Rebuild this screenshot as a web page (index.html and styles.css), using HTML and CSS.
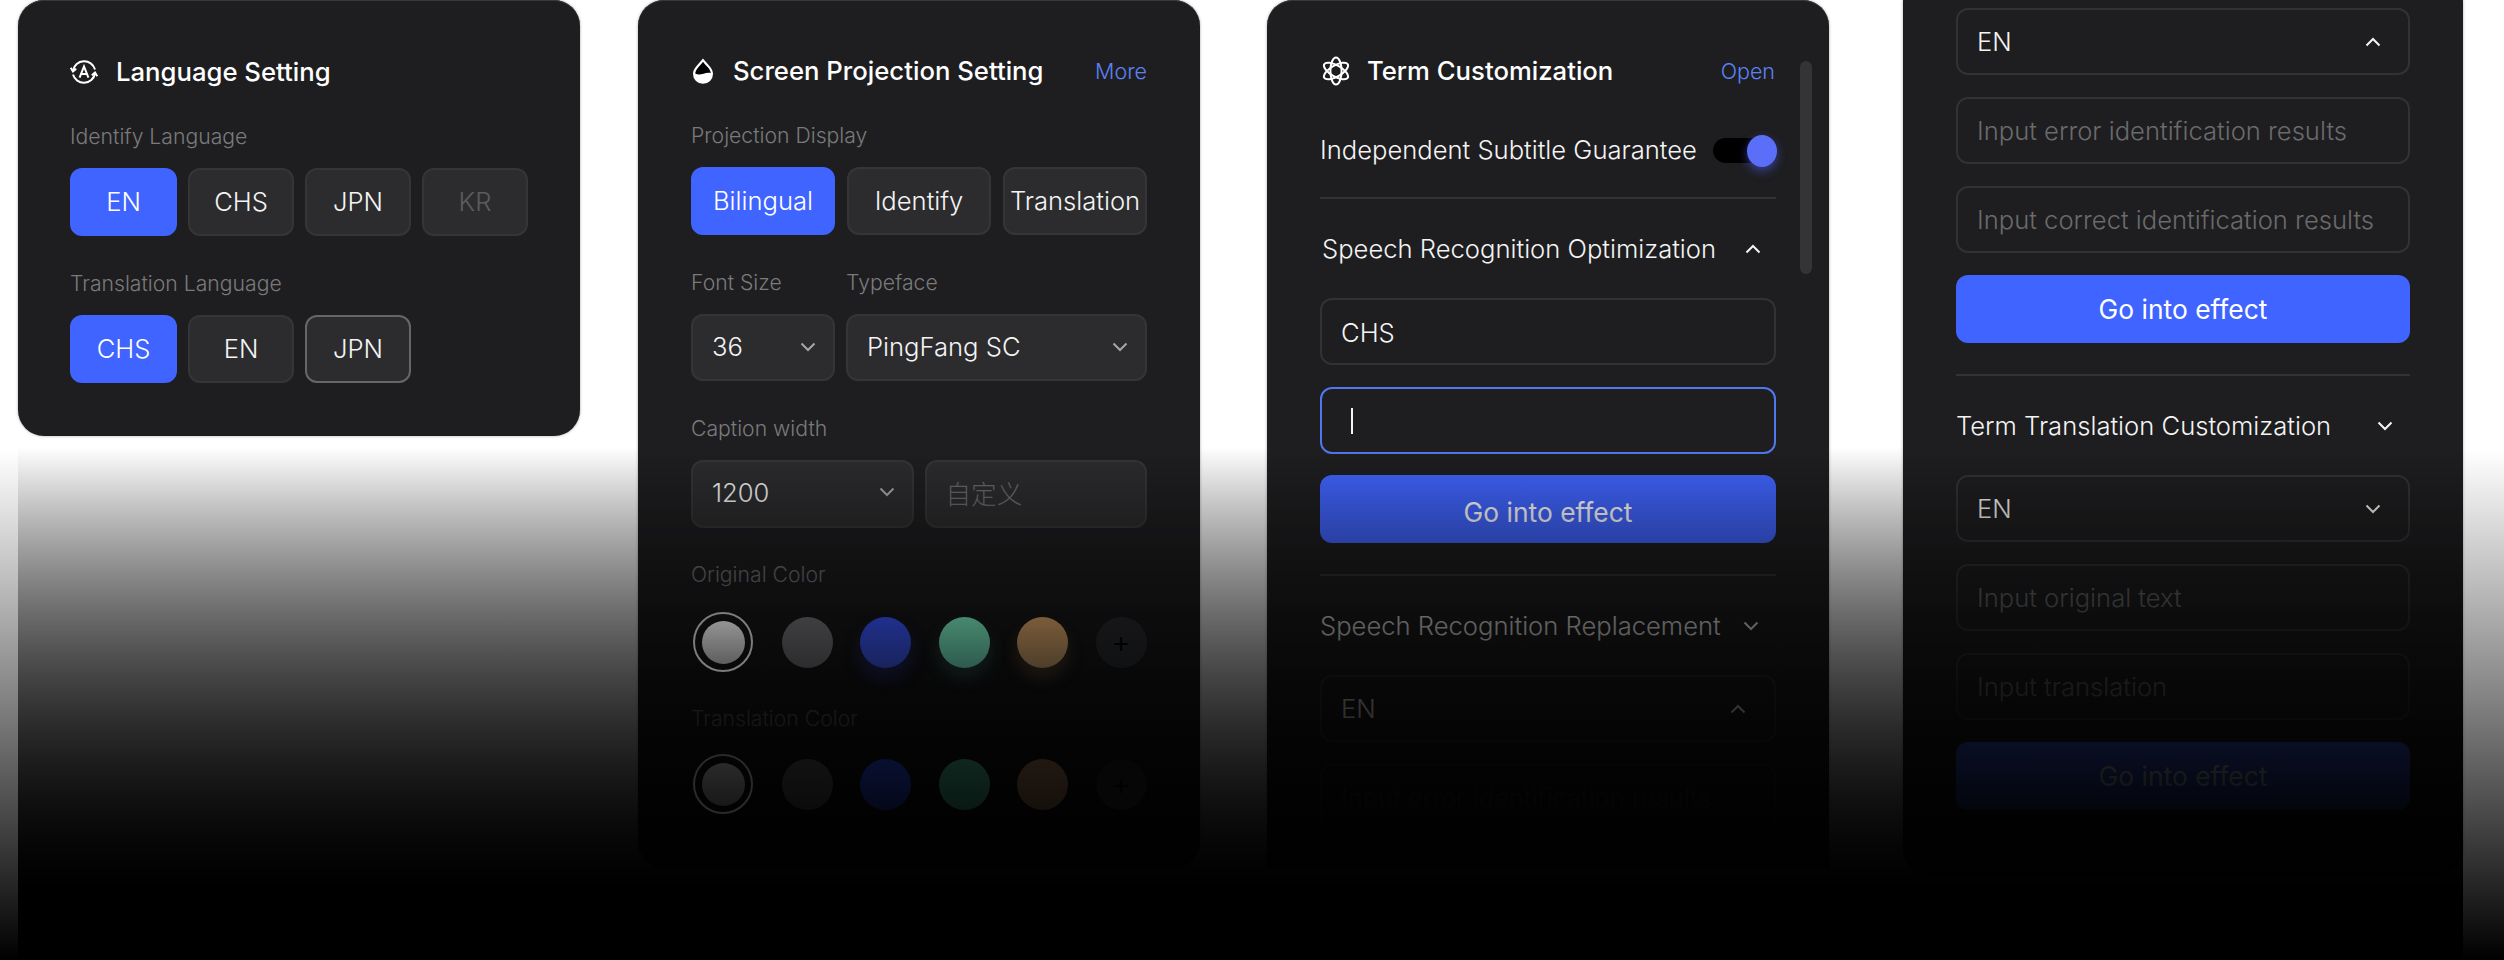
FILE: index.html
```html
<!DOCTYPE html>
<html lang="en">
<head>
    <meta charset="UTF-8">
    <meta name="viewport" content="width=device-width, initial-scale=1.0">
    <title>Subtitle Settings</title>
    <link rel="stylesheet" href="styles.css">
</head>
<body>
    <div class="board">

        <section class="panel panel-language">
            <div class="panel-head">
                <svg class="head-icon" viewBox="0 0 28 28" fill="none" stroke="#fff" stroke-width="2">
                    <path d="M3 12.5A11.3 11.3 0 0 1 25 11.5"/>
                    <path d="M0.8 9.8L3 13.4L6.2 10.8"/>
                    <path d="M25 15.5A11.3 11.3 0 0 1 3 16.5"/>
                    <path d="M27.2 18.2L25 14.6L21.8 17.2"/>
                    <path d="M9.6 19.6L14 8.4L18.4 19.6M11.2 16H16.8"/>
                </svg>
                <h2 class="panel-title">Language Setting</h2>
            </div>
            <div class="label">Identify Language</div>
            <div class="options">
                <div class="option active">EN</div>
                <div class="option">CHS</div>
                <div class="option">JPN</div>
                <div class="option disabled">KR</div>
            </div>
            <div class="label">Translation Language</div>
            <div class="options">
                <div class="option active">CHS</div>
                <div class="option">EN</div>
                <div class="option outlined">JPN</div>
            </div>
        </section>

        <section class="panel panel-projection">
            <div class="panel-head">
                <svg class="head-icon" viewBox="0 0 28 28">
                    <path fill="#fff" d="M14 1.5C19 8 24 11 24 17A10 9.8 0 0 1 4 17C4 11 9 8 14 1.5Z"/>
                    <path fill="#000" d="M14 4.8C17.5 9.4 21.4 12 21.8 16C16 14.6 11.5 19.4 6.2 16.6C6.8 12 10.5 9.4 14 4.8Z"/>
                </svg>
                <h2 class="panel-title">Screen Projection Setting</h2>
                <a class="head-link">More</a>
            </div>
            <div class="label">Projection Display</div>
            <div class="options options-fill">
                <div class="option active">Bilingual</div>
                <div class="option">Identify</div>
                <div class="option">Translation</div>
            </div>
            <div class="font-row">
                <div class="font-size">
                    <div class="label">Font Size</div>
                    <div class="select"><span>36</span>
                        <svg class="chevron" viewBox="0 0 16 10"><path d="M1.5 1.5L8 8L14.5 1.5"/></svg>
                    </div>
                </div>
                <div class="font-face">
                    <div class="label">Typeface</div>
                    <div class="select"><span>PingFang SC</span>
                        <svg class="chevron" viewBox="0 0 16 10"><path d="M1.5 1.5L8 8L14.5 1.5"/></svg>
                    </div>
                </div>
            </div>
            <div class="label">Caption width</div>
            <div class="width-row">
                <div class="select"><span>1200</span>
                    <svg class="chevron" viewBox="0 0 16 10"><path d="M1.5 1.5L8 8L14.5 1.5"/></svg>
                </div>
                <div class="select placeholder">自定义</div>
            </div>
            <div class="label">Original Color</div>
            <div class="swatches">
                <div class="swatch-ring"><span class="swatch-dot"></span></div>
                <div class="swatch gray"></div>
                <div class="swatch blue"></div>
                <div class="swatch green"></div>
                <div class="swatch orange"></div>
                <div class="swatch add">+</div>
            </div>
            <div class="label">Translation Color</div>
            <div class="swatches swatches-last">
                <div class="swatch-ring"><span class="swatch-dot"></span></div>
                <div class="swatch gray"></div>
                <div class="swatch blue"></div>
                <div class="swatch green"></div>
                <div class="swatch orange"></div>
                <div class="swatch add">+</div>
            </div>
        </section>

        <section class="panel panel-terms">
            <div class="scrollbar"></div>
            <div class="panel-head">
                <svg class="head-icon" viewBox="0 0 28 30" fill="none" stroke="#fff" stroke-width="2">
                    <ellipse cx="14" cy="15" rx="5.6" ry="13.6"/>
                    <ellipse cx="14" cy="15" rx="5.6" ry="13.6" transform="rotate(60 14 15)"/>
                    <ellipse cx="14" cy="15" rx="5.6" ry="13.6" transform="rotate(-60 14 15)"/>
                </svg>
                <h2 class="panel-title">Term Customization</h2>
                <a class="head-link">Open</a>
            </div>
            <div class="toggle-row">
                <span>Independent Subtitle Guarantee</span>
                <div class="toggle"><span class="knob"></span></div>
            </div>
            <div class="divider"></div>
            <div class="section-head first">
                <span>Speech Recognition Optimization</span>
                <svg class="chevron" viewBox="0 0 16 10"><path d="M1.5 8.5L8 2L14.5 8.5"/></svg>
            </div>
            <div class="stack">
                <div class="field filled">CHS</div>
                <div class="field focused"><span class="caret"></span></div>
                <div class="submit">Go into effect</div>
            </div>
            <div class="divider spaced"></div>
            <div class="section-head">
                <span>Speech Recognition Replacement</span>
                <svg class="chevron" viewBox="0 0 16 10"><path d="M1.5 1.5L8 8L14.5 1.5"/></svg>
            </div>
            <div class="stack">
                <div class="field"><span>EN</span>
                    <svg class="chevron" viewBox="0 0 16 10"><path d="M1.5 8.5L8 2L14.5 8.5"/></svg>
                </div>
                <div class="field placeholder">Input error identification results</div>
            </div>
        </section>

        <section class="panel panel-more">
            <div class="stack">
                <div class="field"><span>EN</span>
                    <svg class="chevron" viewBox="0 0 16 10"><path d="M1.5 8.5L8 2L14.5 8.5"/></svg>
                </div>
                <div class="field placeholder">Input error identification results</div>
                <div class="field placeholder">Input correct identification results</div>
                <div class="submit">Go into effect</div>
            </div>
            <div class="divider spaced"></div>
            <div class="section-head">
                <span>Term Translation Customization</span>
                <svg class="chevron" viewBox="0 0 16 10"><path d="M1.5 1.5L8 8L14.5 1.5"/></svg>
            </div>
            <div class="stack">
                <div class="field"><span>EN</span>
                    <svg class="chevron" viewBox="0 0 16 10"><path d="M1.5 1.5L8 8L14.5 1.5"/></svg>
                </div>
                <div class="field placeholder">Input original text</div>
                <div class="field placeholder">Input translation</div>
                <div class="submit">Go into effect</div>
            </div>
        </section>

    </div>

    <div class="fade fade-page"></div>
    <div class="fade fade-board"></div>
</body>
</html>
```

FILE: styles.css
```css
body {
    margin: 0;
    width: 2504px;
    height: 960px;
    position: relative;
    overflow: hidden;
    background: #fff;
    font-family: 'Inter', 'Noto Sans CJK SC', sans-serif;
    font-size: 25.6px;
    font-weight: 300;
    color: #f4f4f4;
}

.board {
    display: flex;
    align-items: flex-start;
    padding-left: 18px;
}

.panel {
    position: relative;
    box-sizing: border-box;
    width: 562px;
    padding: 49px 53px 0;
    background: #1e1e20;
    border-radius: 26px;
    box-shadow: 0 0 3px rgba(0,0,0,0.35), inset 0 1px 0 #38383a;
}

.panel-language {
    height: 436px;
    padding: 50px 52px 0;
}

.panel-projection {
    height: 868px;
    margin-left: 58px;
}

.panel-terms {
    height: 868px;
    margin-left: 67px;
    border-radius: 26px 26px 0 0;
    overflow: hidden;
}

.panel-more {
    width: 560px;
    height: 875px;
    margin-left: 74px;
    padding-top: 8px;
    border-radius: 0 0 26px 26px;
    box-shadow: 0 0 3px rgba(0,0,0,0.35);
}

/* header */

.panel-head {
    display: flex;
    align-items: center;
    height: 44px;
    margin-bottom: 28px;
}

.head-icon {
    width: 28px;
    height: 30px;
    margin-right: 18px;
    flex: none;
}

.panel-projection .head-icon {
    margin-left: -2px;
    margin-right: 16px;
}

.panel-terms .head-icon {
    margin-left: 2px;
    margin-right: 17px;
}

.panel-title {
    margin: 0;
    padding-bottom: 1px;
    font-size: 25.7px;
    font-weight: 500;
    color: #fff;
}

.head-link {
    margin-left: auto;
    font-size: 21.5px;
    color: #5b82f5;
}

.panel-terms .head-link {
    margin-right: 1px;
}

/* labels and option buttons */

.label {
    height: 30px;
    line-height: 29px;
    margin-bottom: 16px;
    font-size: 21.2px;
    color: #7a7a7c;
}

.options {
    display: flex;
    gap: 11px;
    margin-bottom: 33px;
}

.option {
    box-sizing: border-box;
    display: flex;
    align-items: center;
    justify-content: center;
    width: 106px;
    height: 68px;
    padding-bottom: 2px;
    background: #2c2c2e;
    border: 2px solid #353537;
    border-radius: 12px;
}

.option.active {
    width: 107px;
    background: #4064ff;
    border-color: #4064ff;
    color: #fff;
}

.option.outlined {
    border-color: #666;
}

.option.disabled {
    color: #5c5c5e;
}

.options-fill {
    gap: 12px;
}

.options-fill .option,
.options-fill .option.active {
    flex: 1;
    width: auto;
    white-space: nowrap;
}

/* selects */

.select {
    box-sizing: border-box;
    display: flex;
    align-items: center;
    justify-content: space-between;
    height: 67px;
    padding: 0 17px 2px 19px;
    background: #2c2c2e;
    border: 2px solid #353537;
    border-radius: 12px;
}

.placeholder {
    color: #6a6a6c;
}

.chevron {
    width: 16px;
    height: 10px;
    flex: none;
    fill: none;
    stroke: currentColor;
    stroke-width: 2;
}

.select .chevron {
    stroke: #a6a6a8;
}

.font-row {
    display: flex;
    gap: 11px;
    margin-bottom: 33px;
}

.font-size {
    width: 144px;
}

.font-face {
    flex: 1;
}

.width-row {
    display: flex;
    gap: 11px;
    margin-bottom: 32px;
}

.width-row .select {
    flex: 1;
    height: 68px;
    padding-bottom: 4px;
}

/* colour swatches, these sit above the fade and carry their own faded colours */

.swatches {
    display: flex;
    align-items: center;
    gap: 27.5px;
    height: 60px;
    margin-top: 22px;
    margin-bottom: 32px;
    position: relative;
    z-index: 2;
}

.swatches-last {
    margin-top: 20px;
}

.swatch-ring {
    box-sizing: border-box;
    display: flex;
    align-items: center;
    justify-content: center;
    width: 60px;
    height: 60px;
    margin: 0 1px 0 2px;
    border: 2px solid #7c7c7c;
    border-radius: 50%;
}

.swatch-dot {
    width: 43px;
    height: 43px;
    background: linear-gradient(180deg, #949494, #5e5e5e);
    border-radius: 50%;
}

.swatch {
    width: 51px;
    height: 51px;
    border-radius: 50%;
}

.gray {
    background: linear-gradient(180deg, #3f3f42, #2c2c2e);
}

.blue {
    background: linear-gradient(180deg, #20308e, #18235c);
    box-shadow: 0 10px 18px rgba(25,35,110,0.3);
}

.green {
    background: linear-gradient(180deg, #47896f, #2e5a4e);
    box-shadow: 0 10px 18px rgba(50,110,90,0.2);
}

.orange {
    background: linear-gradient(180deg, #7a5c3a, #4e3e2a);
    box-shadow: 0 10px 18px rgba(120,85,50,0.2);
}

.add {
    display: flex;
    align-items: center;
    justify-content: center;
    background: linear-gradient(180deg, #161618, #101113);
    color: #000;
    font-size: 30px;
    line-height: 1;
}

.swatches-last .swatch-ring {
    border-color: #2a2a2a;
}

.swatches-last .swatch-dot {
    background: linear-gradient(180deg, #2a2a2a, #181818);
}

.swatches-last .gray {
    background: linear-gradient(180deg, #121212, #0b0b0b);
}

.swatches-last .blue {
    background: linear-gradient(180deg, #081030, #05081a);
    box-shadow: none;
}

.swatches-last .green {
    background: linear-gradient(180deg, #0f261e, #0a1814);
    box-shadow: none;
}

.swatches-last .orange {
    background: linear-gradient(180deg, #221811, #15100b);
    box-shadow: none;
}

.swatches-last .add {
    background: #060606;
    color: #000;
}

/* term customization */

.scrollbar {
    position: absolute;
    top: 61px;
    right: 17px;
    width: 12px;
    height: 213px;
    background: #343436;
    border-radius: 6px;
}

.toggle-row {
    display: flex;
    align-items: center;
    justify-content: space-between;
    height: 50px;
    margin-top: 32px;
    margin-right: -1px;
}

.toggle-row span:first-child,
.section-head span {
    padding-bottom: 2px;
}

.toggle {
    position: relative;
    width: 64px;
    height: 25px;
    background: linear-gradient(90deg, #000 50%, #22223a);
    border-radius: 13px;
}

.knob {
    position: absolute;
    right: 0;
    top: -3px;
    width: 30px;
    height: 30px;
    background: #5a6ef8;
    border-radius: 50%;
    box-shadow: 0 4px 10px rgba(80,100,255,0.5);
}

.divider {
    height: 2px;
    margin-top: 22px;
    background: #333335;
}

.divider.spaced {
    margin-top: 31px;
}

.section-head {
    display: flex;
    align-items: center;
    justify-content: space-between;
    height: 44px;
    margin: 28px 0 27px;
    padding-right: 17px;
}

.section-head.first {
    padding-left: 2px;
    padding-right: 15px;
}

.stack {
    display: flex;
    flex-direction: column;
    gap: 22px;
}

.field {
    box-sizing: border-box;
    display: flex;
    align-items: center;
    justify-content: space-between;
    height: 67px;
    padding: 0 20px 0 19px;
    border: 2px solid #323234;
    border-radius: 12px;
}

.field.filled {
    padding-top: 2px;
}

.field .chevron {
    margin-right: 8px;
}

.panel-more .field .chevron {
    margin-right: 7px;
}

.panel-terms .placeholder {
    color: #444446;
}

.field.focused {
    justify-content: flex-start;
    border-color: #4f78ee;
}

.caret {
    width: 2px;
    height: 26px;
    margin-left: 10px;
    background: #f4f4f4;
}

.submit {
    display: flex;
    align-items: center;
    justify-content: center;
    height: 68px;
    background: #4064ff;
    border-radius: 12px;
    font-size: 26.4px;
    font-weight: 400;
    color: #fff;
}

.panel-terms .submit {
    margin-top: -1px;
    box-sizing: border-box;
    padding-top: 6px;
}

/* the page fades out towards the bottom */

.fade {
    position: absolute;
    top: 0;
    bottom: 0;
    z-index: 1;
    pointer-events: none;
}

.fade-page {
    left: 0;
    right: 0;
    background: linear-gradient(180deg, rgba(0,0,0,0) 450px, #000 960px);
}

.fade-board {
    left: 18px;
    right: 41px;
    background: linear-gradient(180deg, rgba(0,0,0,0) 445px, #000 890px);
}
```
